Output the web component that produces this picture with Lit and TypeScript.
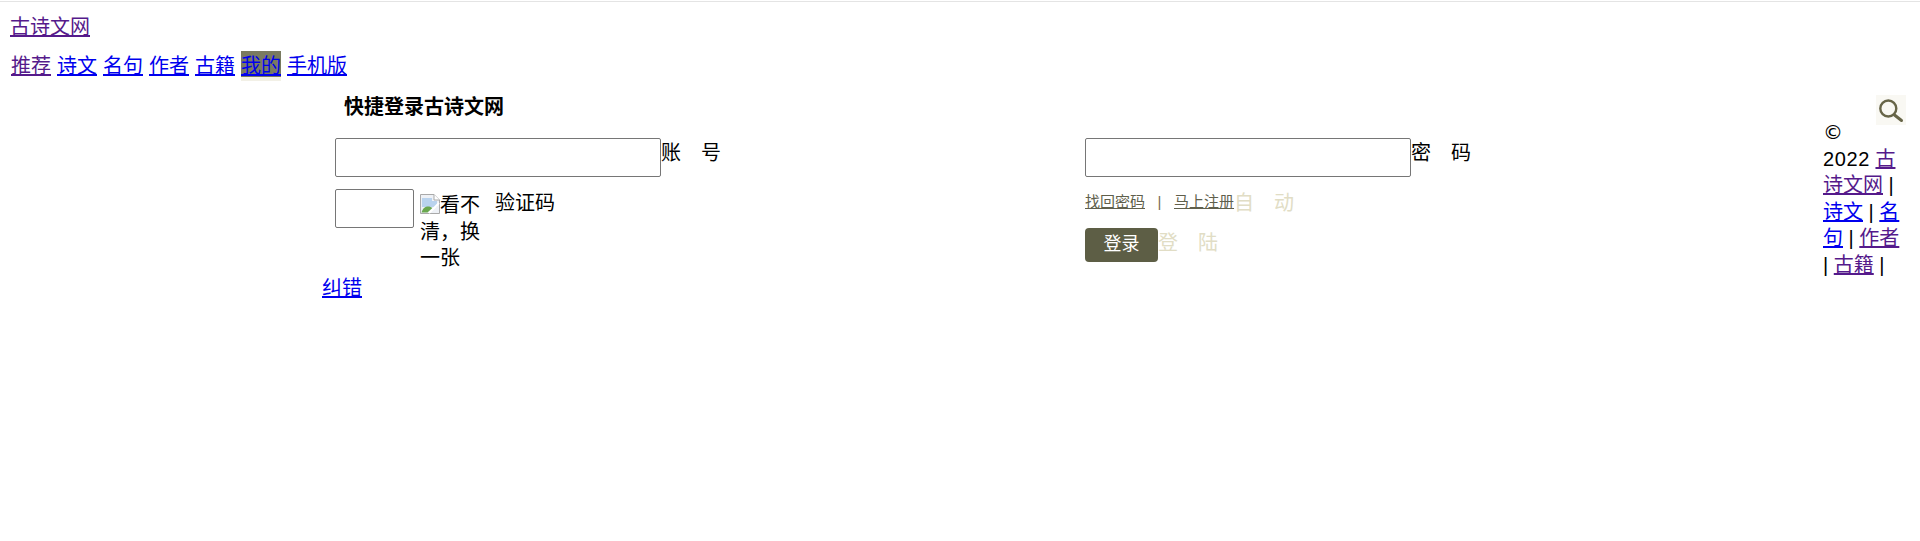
import { LitElement, html, css, svg } from "lit";
import { customElement } from "lit/decorators.js";

@customElement("app-root")
export class AppRoot extends LitElement {
  static styles = css`
    :host {
      display: block;
      min-height: 541px;
      background: #fff;
      color: #000;
      font-family: "Liberation Sans", "Noto Sans CJK SC", sans-serif;
      font-size: 20px;
      line-height: 26.5px;
    }
    a { color: #00e; text-decoration: underline; }
    a.v { color: #551a8b; }
    .topline { height: 1px; margin-top: 1px; background: #e4e4e4; }
    .brand { padding: 12px 0 0 10px; height: 27px; }
    .nav { display: flex; gap: 6px; padding: 12px 0 0 11px; height: 27px; }
    .nav .cur {
      background: linear-gradient(#7a7a60 0 26px, #f2f0e6 26px);
      height: 30px; margin-top: -2px; padding-top: 2px; box-sizing: border-box;
    }
    .main { display: flex; margin-top: 12px; }
    .center { margin-left: 322px; width: 1501px; flex: none; }
    .title { font-weight: 700; margin: 0 0 0 22px; height: 27px; padding-top: 2px; }
    .form { display: grid; grid-template-columns: 750px 1fr; margin: 17px 0 0 13px; row-gap: 12px; }
    .cell { display: flex; align-items: flex-start; }
    input {
      box-sizing: border-box; margin: 0; padding: 0; border: 1px solid #767676; border-radius: 2px;
      background: #fff; height: 39px; display: block;
    }
    .wide { width: 326px; }
    .code { width: 79px; }
    .lbl { display: flex; gap: 20px; padding-top: 2px; }
    .muted { color: #e1ddc5; }
    .alt { display: block; width: 60px; margin-left: 6px; margin-top: 3px; }
    .broken { display: inline-block; width: 20px; height: 20px; vertical-align: -2px; }
    .vcode { margin-left: 15px; margin-top: 1px; }
    .links { display: flex; align-items: center; height: 26px; font-size: 15px; }
    .links a { color: #5f5f4c; }
    .links .sep { width: 29px; text-align: center; color: #7a6a50; }
    .stack { display: flex; flex-direction: column; }
    .line { display: flex; }
    .line .lbl { padding-top: 1px; }
    .btnrow { display: flex; margin-top: 11px; }
    .btn { width: 73px; height: 34px; background: #5d5e45; color: #fff; border-radius: 4px; text-align: center; line-height: 32px; font-size: 18px; }
    .btnrow .lbl { padding-top: 2px; }
    .fix { margin: 3px 0 0 0; display: block; width: fit-content; }
    .right { width: 82px; flex: none; }
    .search { display: block; width: 30px; height: 30px; margin: 3px 0 0 53px; background: #f9f8f3; }
    .search svg { display: block; }
    .foot { margin-top: -6px; }
    .year { letter-spacing: 0.6px; }
    .copy { font-family: "DejaVu Sans", sans-serif; }
  `;

  render() {
    const broken = svg`<svg class="broken" viewBox="0 0 20 20">
      <path d="M0.5 0.5H14L19.5 6V19.5H0.5Z" fill="#eef1f6" stroke="#a9a9a9"/>
      <path d="M14 .5V6H19.5" fill="#fff" stroke="#a9a9a9"/>
      <path d="M2 4H12V7H17V13H2Z" fill="#b9d3ee"/>
      <path d="M1.5 18.5C3 12 9 11 12.5 14L7.5 18.5Z" fill="#6aa84f"/>
      <path d="M9 19L19 9" stroke="#fff" stroke-width="2"/>
    </svg>`;
    return html`
      <div class="topline"></div>
      <div class="brand"><a class="v" href="#">古诗文网</a></div>
      <nav class="nav">
        <a class="v" href="#">推荐</a><a href="#">诗文</a><a href="#">名句</a><a href="#">作者</a><a href="#">古籍</a><a class="cur" href="#">我的</a><a href="#">手机版</a>
      </nav>
      <div class="main">
        <div class="center">
          <div class="title">快捷登录古诗文网</div>
          <div class="form">
            <div class="cell">
              <input class="wide" type="text" />
              <span class="lbl"><span>账</span><span>号</span></span>
            </div>
            <div class="cell">
              <input class="wide" type="password" />
              <span class="lbl"><span>密</span><span>码</span></span>
            </div>
            <div class="cell">
              <input class="code" type="text" />
              <span class="alt">${broken}看不清，换一张</span>
              <span class="vcode">验证码</span>
            </div>
            <div class="stack">
              <div class="line">
                <div class="links"><a href="#">找回密码</a><span class="sep">|</span><a href="#">马上注册</a></div>
                <span class="lbl muted"><span>自</span><span>动</span></span>
              </div>
              <div class="btnrow">
                <div class="btn">登录</div>
                <span class="lbl muted"><span>登</span><span>陆</span></span>
              </div>
            </div>
          </div>
          <a class="fix" href="#">纠错</a>
        </div>
        <div class="right">
          <div class="search">
            <svg width="30" height="30" viewBox="0 0 30 30" fill="none" stroke="#676548">
              <circle cx="12.3" cy="13.5" r="8" stroke-width="2.4"/>
              <path d="M18.5 20L25.5 25.5" stroke-width="3" stroke-linecap="round"/>
            </svg>
          </div>
          <div class="foot"><span class="copy">©</span><br /><span class="year">2022</span> <a class="v" href="#">古诗文网</a> | <a href="#">诗文</a> | <a href="#">名句</a> | <a class="v" href="#">作者</a> | <a class="v" href="#">古籍</a> |</div>
        </div>
      </div>
    `;
  }
}
